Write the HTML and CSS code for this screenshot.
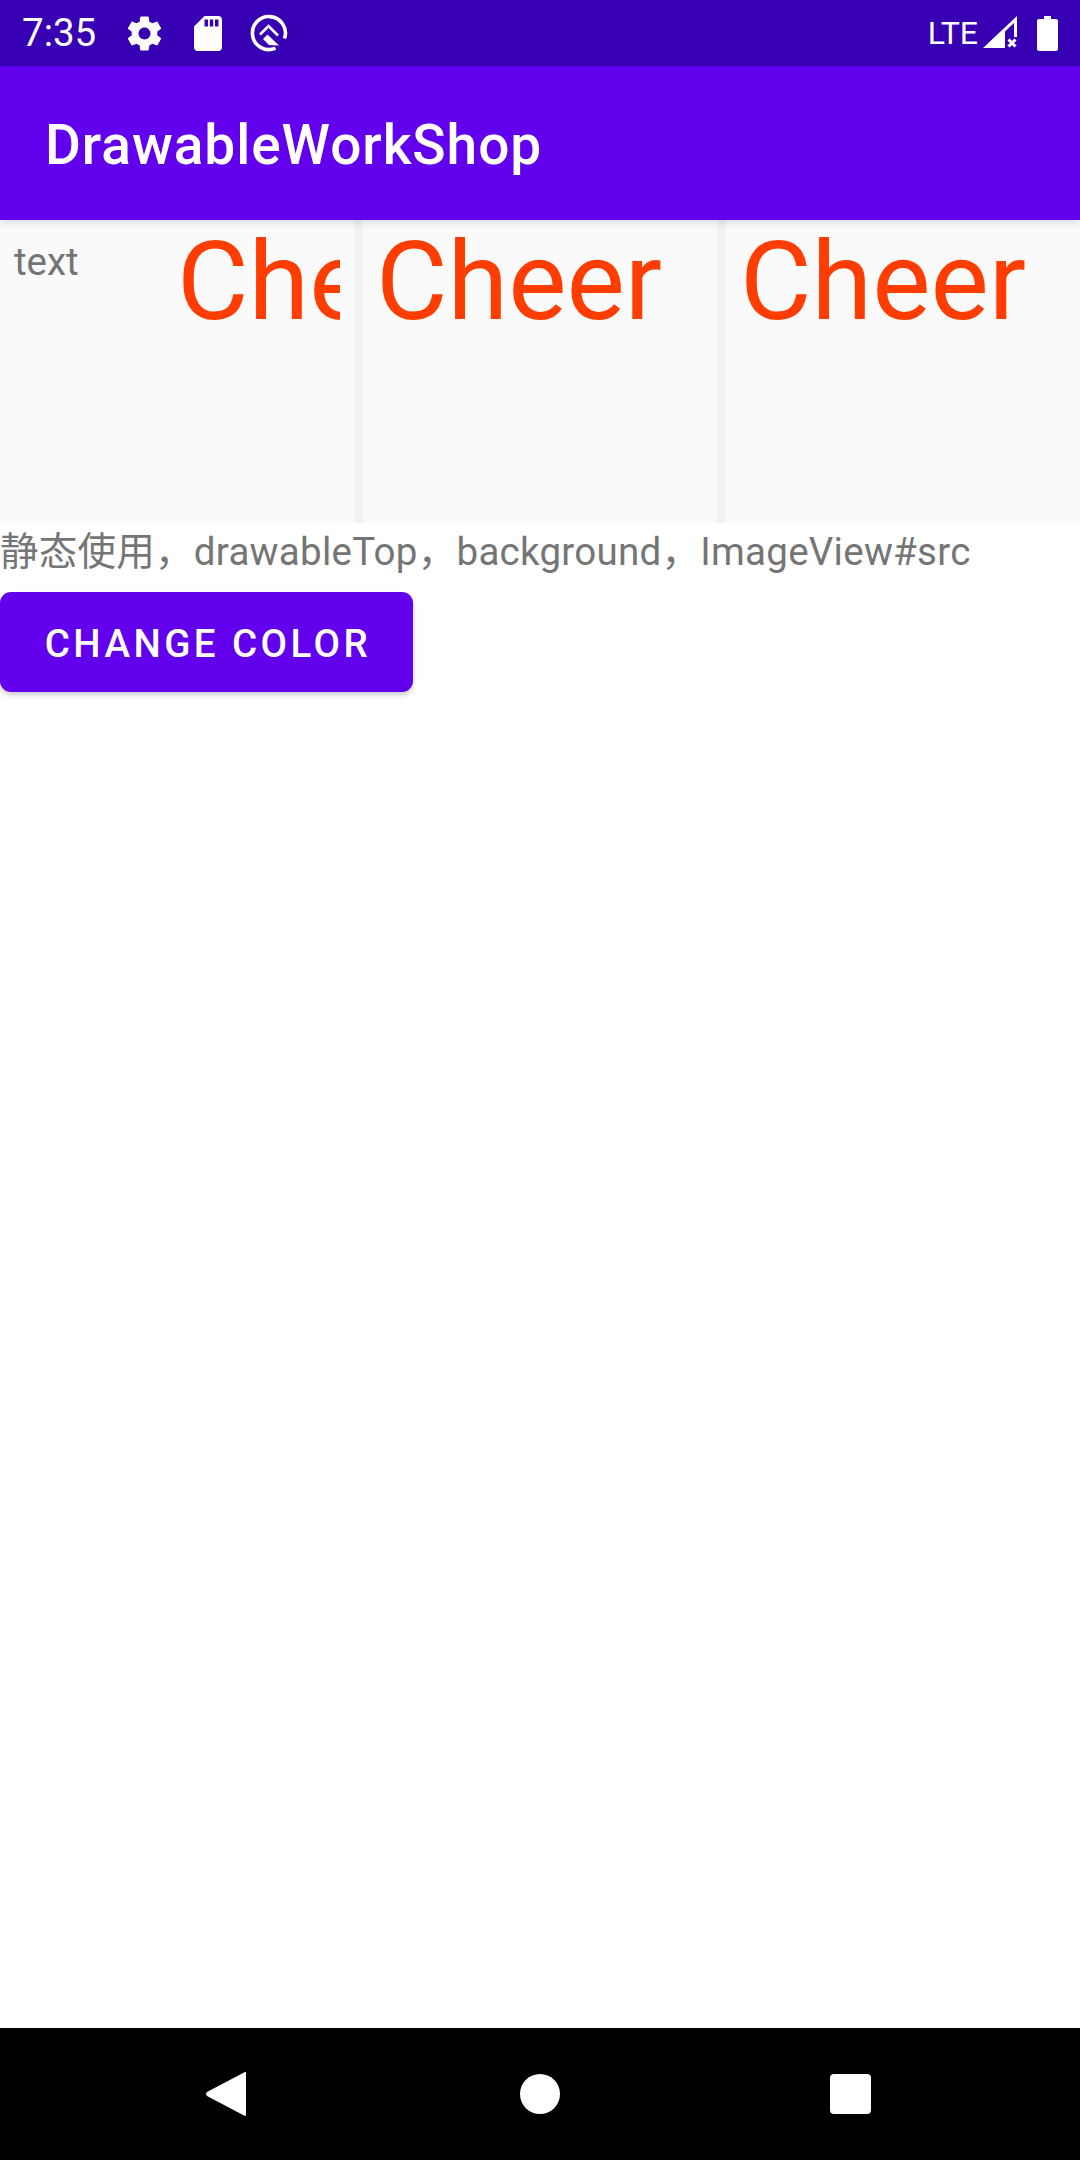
FILE: index.html
```html
<!DOCTYPE html>
<html lang="en">
<head>
    <meta charset="UTF-8">
    <meta name="viewport" content="width=device-width, initial-scale=1.0">
    <title>DrawableWorkShop</title>
    <link rel="stylesheet" href="styles.css">
</head>
<body>
<div class="screen">
    <div class="status-bar">
        <span class="clock">7:35</span>
        <svg class="icon-gear" viewBox="0 0 24 24"><path d="M19.43 12.98c.04-.32.07-.64.07-.98s-.03-.66-.07-.98l2.11-1.65c.19-.15.24-.42.12-.64l-2-3.46c-.12-.22-.39-.3-.61-.22l-2.49 1c-.52-.4-1.08-.73-1.69-.98l-.38-2.65C14.46 2.18 14.25 2 14 2h-4c-.25 0-.46.18-.49.42l-.38 2.65c-.61.25-1.17.59-1.69.98l-2.49-1c-.23-.09-.49 0-.61.22l-2 3.46c-.13.22-.07.49.12.64l2.11 1.65c-.04.32-.07.65-.07.98s.03.66.07.98l-2.11 1.65c-.19.15-.24.42-.12.64l2 3.46c.12.22.39.3.61.22l2.49-1c.52.4 1.08.73 1.69.98l.38 2.65c.03.24.24.42.49.42h4c.25 0 .46-.18.49-.42l.38-2.65c.61-.25 1.17-.59 1.69-.98l2.49 1c.23.09.49 0 .61-.22l2-3.46c.12-.22.07-.49-.12-.64l-2.11-1.65zM12 15.5c-1.93 0-3.5-1.57-3.5-3.5s1.57-3.5 3.500-3.500 3.500 1.570 3.500 3.500-1.570 3.500-3.500 3.500z"/></svg>
        <svg class="icon-sd" viewBox="4 2 16 20"><path d="M18 2h-8L4.02 8 4 20c0 1.100.9 2 2 2h12c1.100 0 2-.9 2-2V4c0-1.100-.9-2-2-2zm-6 6h-2V4h2v4zm3 0h-2V4h2v4zm3 0h-2V4h2v4z"/></svg>
        <svg class="icon-q" viewBox="6 6 38 38">
            <path class="q-line q-ring" d="M31.500 40.200A16.500 16.500 0 1 1 40.500 30.500"/>
            <path class="q-line q-roof" d="M16 26.500L24.500 18 34 27.500"/>
            <path d="M19 31L23.500 26.500 35 37.500 25 37z"/>
        </svg>
        <span class="spacer"></span>
        <span class="lte">LTE</span>
        <svg class="icon-signal" viewBox="0 0 34 34"><path d="M0 32L34 0v21h-3V7L22 15.500V32z"/><path class="signal-x" d="M25.500 23.500l7 7m0-7l-7 7"/></svg>
        <svg class="icon-battery" viewBox="0 0 21 35"><path d="M7 0h7v3h5c1.100 0 2 .9 2 2v28c0 1.100-.9 2-2 2H2c-1.100 0-2-.9-2-2V5c0-1.100.9-2 2-2h5z"/></svg>
    </div>

    <div class="app-bar">DrawableWorkShop</div>

    <div class="content">
        <div class="image-row">
            <div class="cell cell-first">
                <span class="cell-text">text</span>
                <span class="cheer-clip"><span class="cheer">Cheer</span></span>
            </div>
            <div class="cell"><span class="cheer">Cheer</span></div>
            <div class="cell"><span class="cheer">Cheer</span></div>
        </div>
        <p class="caption">静态使用，drawableTop，background，ImageView#src</p>
        <button class="change-color">Change Color</button>
    </div>

    <div class="nav-bar">
        <svg class="icon-back" viewBox="0 0 40 46"><path d="M38 1.500c1-.8 2-.3 2 1v41c0 1.300-1 1.800-2 1L1 25c-1.300-1-1.300-3 0-4z"/></svg>
        <span class="icon-home"></span>
        <span class="icon-recent"></span>
    </div>
</div>
</body>
</html>
```

FILE: styles.css
```css
* {
    box-sizing: border-box;
}
body {
    margin: 0;
    background-color: #fff;
    font-family: Roboto, "Noto Sans CJK SC", sans-serif;
}
.screen {
    display: flex;
    flex-direction: column;
    width: 1080px;
    height: 2160px;
    overflow: hidden;
}
svg {
    display: block;
    fill: #fff;
    flex: none;
}

/* status bar */
.status-bar {
    display: flex;
    align-items: center;
    height: 66px;
    padding: 0 22px;
    background-color: #3700b3;
    color: #fff;
}
.clock {
    width: 74px;
    font-size: 38.5px;
    line-height: 66px;
}
.icon-gear {
    width: 41px;
    height: 41px;
    margin-left: 28px;
}
.icon-sd {
    width: 28px;
    height: 35px;
    margin-left: 29px;
}
.icon-q {
    width: 38px;
    height: 38px;
    margin-left: 28px;
}
.q-line {
    fill: none;
    stroke: #fff;
}
.q-ring {
    stroke-width: 3.6;
}
.q-roof {
    stroke-width: 2.6;
}
.spacer {
    flex: 1;
}
.lte {
    font-size: 32px;
    line-height: 66px;
}
.icon-signal {
    width: 34px;
    height: 34px;
    margin-left: 5px;
}
.signal-x {
    fill: none;
    stroke: #fff;
    stroke-width: 3;
}
.icon-battery {
    width: 21px;
    height: 35px;
    margin-left: 20px;
}

/* app bar */
.app-bar {
    position: relative;
    height: 154px;
    padding-left: 45px;
    background-color: #6200ee;
    color: #fff;
    font-size: 55px;
    font-weight: 500;
    line-height: 159px;
    letter-spacing: 0.0175em;
    box-shadow: 0 3px 8px rgba(0, 0, 0, 0.12);
}

/* content */
.content {
    flex: 1;
}
.image-row {
    display: grid;
    grid-template-columns: 354px 356px 355px;
    column-gap: 8px;
    height: 303px;
    background-color: #f2f2f2;
}
.cell {
    display: flex;
    padding-left: 14px;
    background-color: #fafafa;
}
.cell-first {
    justify-content: space-between;
    padding-right: 14px;
}
.cell-text {
    margin-top: 19px;
    color: #757575;
    font-size: 38.5px;
    line-height: 45px;
}
.cheer-clip {
    display: block;
    width: 163px;
    overflow: hidden;
}
.cheer {
    color: #ff3d00;
    font-size: 110px;
    line-height: 123px;
}
.caption {
    height: 69px;
    margin: 0;
    padding-top: 6px;
    color: #757575;
    font-size: 38.5px;
    line-height: 45px;
    letter-spacing: 0.27px;
}
.change-color {
    display: block;
    width: 413px;
    height: 100px;
    padding: 2px 0 0 3px;
    border: none;
    border-radius: 11px;
    background-color: #6200ee;
    color: #fff;
    font-family: Roboto, sans-serif;
    font-size: 38.5px;
    font-weight: 500;
    letter-spacing: 0.0892857em;
    text-transform: uppercase;
    box-shadow: 0 3px 5px rgba(0, 0, 0, 0.2);
}

/* nav bar */
.nav-bar {
    display: flex;
    align-items: center;
    height: 132px;
    background-color: #000;
}
.icon-back {
    width: 40px;
    height: 46px;
    margin-left: 206px;
}
.icon-home {
    width: 40px;
    height: 40px;
    margin-left: 274px;
    border-radius: 50%;
    background-color: #fff;
}
.icon-recent {
    width: 41px;
    height: 40px;
    margin-left: 270px;
    border-radius: 4px;
    background-color: #fff;
}
```
